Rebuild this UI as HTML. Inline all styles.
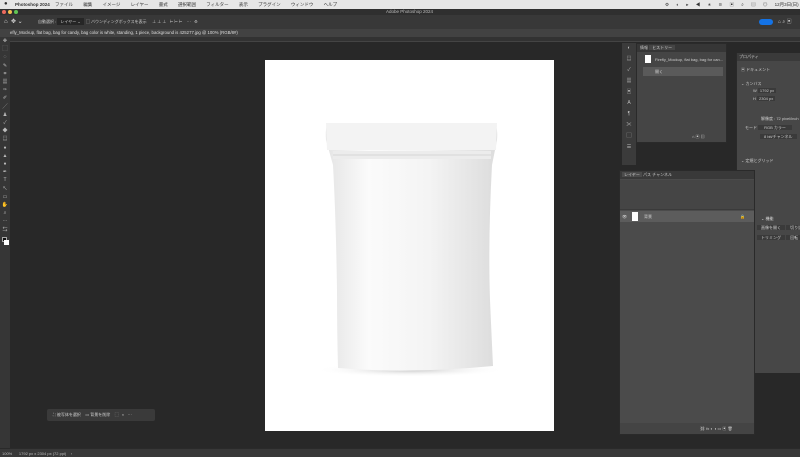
<!DOCTYPE html>
<html><head><meta charset="utf-8"><style>
*{margin:0;padding:0;box-sizing:border-box}
body{width:800px;height:457px;overflow:hidden;background:#282828;position:relative;font-family:"Liberation Sans","Noto Sans CJK JP",sans-serif;color:#ccc;font-size:4px}
div{position:absolute}
.t{white-space:nowrap}
</style></head><body>
<div style="left:0;top:0;width:800px;height:9px;background:#e6e6e6;color:#333;font-size:4.5px;line-height:9px">
<span class="t" style="position:absolute;left:4px;font-size:6px">●</span>
<span class="t" style="position:absolute;left:15px;font-weight:bold">Photoshop 2024</span>
<span class="t" style="position:absolute;left:55px;word-spacing:9px">ファイル 編集 イメージ レイヤー 書式 選択範囲 フィルター 表示 プラグイン ウィンドウ ヘルプ</span>
<span class="t" style="position:absolute;left:665px;word-spacing:6px">⚙ ◐ ▸ ◀ ∗ ≋ ▣ ⌕ ▤ ◎ 12月3日(日)</span>
</div>
<div style="left:0;top:9px;width:800px;height:6px;background:#2f2f2f">
<span style="position:absolute;left:2px;top:1px;width:4px;height:4px;border-radius:50%;background:#ed6a5e"></span>
<span style="position:absolute;left:8px;top:1px;width:4px;height:4px;border-radius:50%;background:#f5bf4f"></span>
<span style="position:absolute;left:14px;top:1px;width:4px;height:4px;border-radius:50%;background:#61c554"></span>
<span class="t" style="position:absolute;left:386px;top:0;font-size:4.5px;line-height:6px;color:#bbb">Adobe Photoshop 2024</span>
</div>
<div style="left:0;top:15px;width:800px;height:14px;background:#383838;line-height:14px">
<span class="t" style="position:absolute;left:4px;font-size:6px;color:#ddd">⌂ &nbsp;✥ ⌄</span>
<span class="t" style="position:absolute;left:38px;color:#ccc">自動選択 : <span style="background:#262626;padding:1px 3px">レイヤー ⌄</span> &nbsp;▢ バウンディングボックスを表示 &nbsp;&nbsp;&nbsp; ⊥ ⊥ ⊥ &nbsp; ⊢ ⊢ ⊢ &nbsp;&nbsp; ··· &nbsp; ⚙</span>
<span style="position:absolute;left:759px;top:4px;width:14px;height:6px;border-radius:3px;background:#1473e6"></span>
<span class="t" style="position:absolute;left:778px;color:#ccc;font-size:5px">⌂ ⌕ ▣</span>
</div>
<div style="left:0;top:29px;width:800px;height:8px;background:#424242">
<span class="t" style="position:absolute;left:10px;top:0;line-height:8px;color:#ddd;font-size:4.3px">efly_Mockup, flat bag, bag for candy, bag color is white, standing, 1 piece, background is 425277.jpg @ 100% (RGB/8#)</span>
</div>
<div style="left:10px;top:37px;width:790px;height:5px;background:#323232;border-bottom:1px solid #444"></div>
<div style="left:0;top:37px;width:10px;height:411px;background:#363636;color:#bbb;font-size:5px;line-height:8.2px;text-align:center">
✥<br>⬚<br>◌<br>✎<br>⌗<br>▦<br>✑<br>✐<br>╱<br>♟<br>✓<br>◆<br>▤<br>●<br>▲<br>●<br>✒<br>T<br>↖<br>▭<br>✋<br>⌕<br>···<br>⇆
<span style="position:absolute;left:2px;top:200px;width:5px;height:5px;background:#111;border:1px solid #aaa"></span>
<span style="position:absolute;left:4px;top:203px;width:5px;height:5px;background:#fff"></span>
</div>
<div style="left:265px;top:60px;width:289px;height:371px;background:#fff"></div>
<svg style="position:absolute;left:300px;top:110px" width="230" height="280" viewBox="300 110 230 280">
<defs><linearGradient id="g" x1="0" x2="1"><stop offset="0" stop-color="#e4e4e4"/><stop offset="0.25" stop-color="#fbfbfb"/><stop offset="0.6" stop-color="#f4f4f4"/><stop offset="1" stop-color="#dcdcdc"/></linearGradient>
<radialGradient id="s" cx="0.5" cy="0.5" r="0.5"><stop offset="0" stop-color="#c8c8c8"/><stop offset="1" stop-color="#fff" stop-opacity="0"/></radialGradient></defs>
<ellipse cx="410" cy="370" rx="95" ry="7" fill="url(#s)"/>
<path d="M329 123 L494 123 Q498 126 497 140 L492 165 Q488 240 490 300 Q492 345 493 366 Q410 374 338 368 Q337 330 337 290 Q336 220 333 165 L326 140 Q325 125 329 123Z" fill="url(#g)"/>
<path d="M326 123 L497 123 L496 150 L327 150Z" fill="#f3f3f3"/>
<rect x="333" y="151" width="158" height="8" fill="#ececec"/>
<line x1="333" y1="155" x2="491" y2="155" stroke="#d6d6d6" stroke-width="1"/>
</svg>
<div style="left:47px;top:409px;width:108px;height:12px;background:#3a3a3a;border-radius:2px;color:#ccc;line-height:12px">
<span class="t" style="position:absolute;left:6px">⛶ 被写体を選択 &nbsp;&nbsp; ▭ 背景を削除 &nbsp;&nbsp; ⬚ &nbsp; ◐ &nbsp; ···</span></div>
<div style="left:622px;top:43px;width:14px;height:122px;background:#3b3b3b;color:#bbb;font-size:5px;line-height:11px;text-align:center">◐<br>▤<br>✓<br>▦<br>▣<br>A<br>¶<br>✂<br>▢<br>☰</div>
<div style="left:636px;top:43px;width:91px;height:100px;background:#454545;border:1px solid #2a2a2a">
<div style="left:0;top:0;width:89px;height:8px;background:#363636"><span class="t" style="position:absolute;left:3px;top:1px">情報 <span style="background:#454545;padding:0 3px">ヒストリー</span></span></div>
<div style="left:2px;top:10px;width:86px;height:10px"><span style="position:absolute;left:6px;top:1px;width:6px;height:8px;background:#fff"></span><span class="t" style="position:absolute;left:16px;top:3px">Firefly_Mockup, flat bag, bag for can...</span></div>
<div style="left:6px;top:23px;width:80px;height:9px;background:#5a5a5a"><span class="t" style="position:absolute;left:12px;top:2px">開く</span></div>
<span class="t" style="position:absolute;left:55px;top:90px">⌂ ▣ ▥</span>
</div>
<div style="left:736px;top:53px;width:64px;height:320px;background:#474747;border-left:1px solid #2a2a2a">
<div style="left:0;top:0;width:64px;height:8px;background:#3a3a3a"><span class="t" style="position:absolute;left:2px;top:1px">プロパティ</span></div>
<span class="t" style="position:absolute;left:4px;top:14px">▣ ドキュメント</span>
<span class="t" style="position:absolute;left:4px;top:28px">⌄ カンバス</span>
<span class="t" style="position:absolute;left:16px;top:35px">W <span style="background:#3a3a3a;padding:0 2px">1792 px</span></span>
<span class="t" style="position:absolute;left:16px;top:43px">H <span style="background:#3a3a3a;padding:0 2px">2304 px</span></span>
<span class="t" style="position:absolute;left:24px;top:63px">解像度 : 72 pixel/inch</span>
<span class="t" style="position:absolute;left:8px;top:72px">モード <span style="background:#3a3a3a;padding:0 6px">RGB カラー</span></span>
<span class="t" style="position:absolute;left:23px;top:81px"><span style="background:#3a3a3a;padding:0 4px">8 bit/チャンネル</span></span>
<span class="t" style="position:absolute;left:4px;top:105px">⌄ 定規とグリッド</span>
<span class="t" style="position:absolute;left:24px;top:163px;color:#ddd">⌄ 機能</span>
<span class="t" style="position:absolute;left:20px;top:172px"><span style="background:#3a3a3a;padding:0 4px">画像を開く</span> <span style="background:#3a3a3a;padding:0 4px">切り抜き</span></span>
<span class="t" style="position:absolute;left:20px;top:182px"><span style="background:#3a3a3a;padding:0 4px">トリミング</span> <span style="background:#3a3a3a;padding:0 4px">回転</span></span>
</div>
<div style="left:619px;top:170px;width:136px;height:265px;background:#4b4b4b;border:1px solid #2a2a2a">
<div style="left:0;top:0;width:134px;height:8px;background:#393939"><span class="t" style="position:absolute;left:2px;top:1px"><span style="background:#4b4b4b;padding:0 2px">レイヤー</span> パス チャンネル</span></div>
<div style="left:0;top:9px;width:134px;height:30px;background:#454545;border-bottom:1px solid #3a3a3a"></div>
<div style="left:0;top:40px;width:134px;height:11px;background:#5c5c5c"><span style="position:absolute;left:2px;top:3px">👁</span><span style="position:absolute;left:12px;top:1px;width:6px;height:9px;background:#fff"></span><span class="t" style="position:absolute;left:24px;top:3px">背景</span><span class="t" style="position:absolute;left:120px;top:3px">🔒</span></div>
<div style="left:0;top:252px;width:134px;height:11px;background:#444"><span class="t" style="position:absolute;left:80px;top:3px;color:#ccc">⛓ fx ◐ ◑ ▭ ▣ 🗑</span></div>
</div>
<div style="left:0;top:448px;width:800px;height:9px;background:#383838;border-top:1px solid #2a2a2a"><span class="t" style="position:absolute;left:2px;top:2px;color:#bbb">100% &nbsp;&nbsp;&nbsp;&nbsp; 1792 px x 2304 px (72 ppi) &nbsp;&nbsp; ›</span></div>
</body></html>
